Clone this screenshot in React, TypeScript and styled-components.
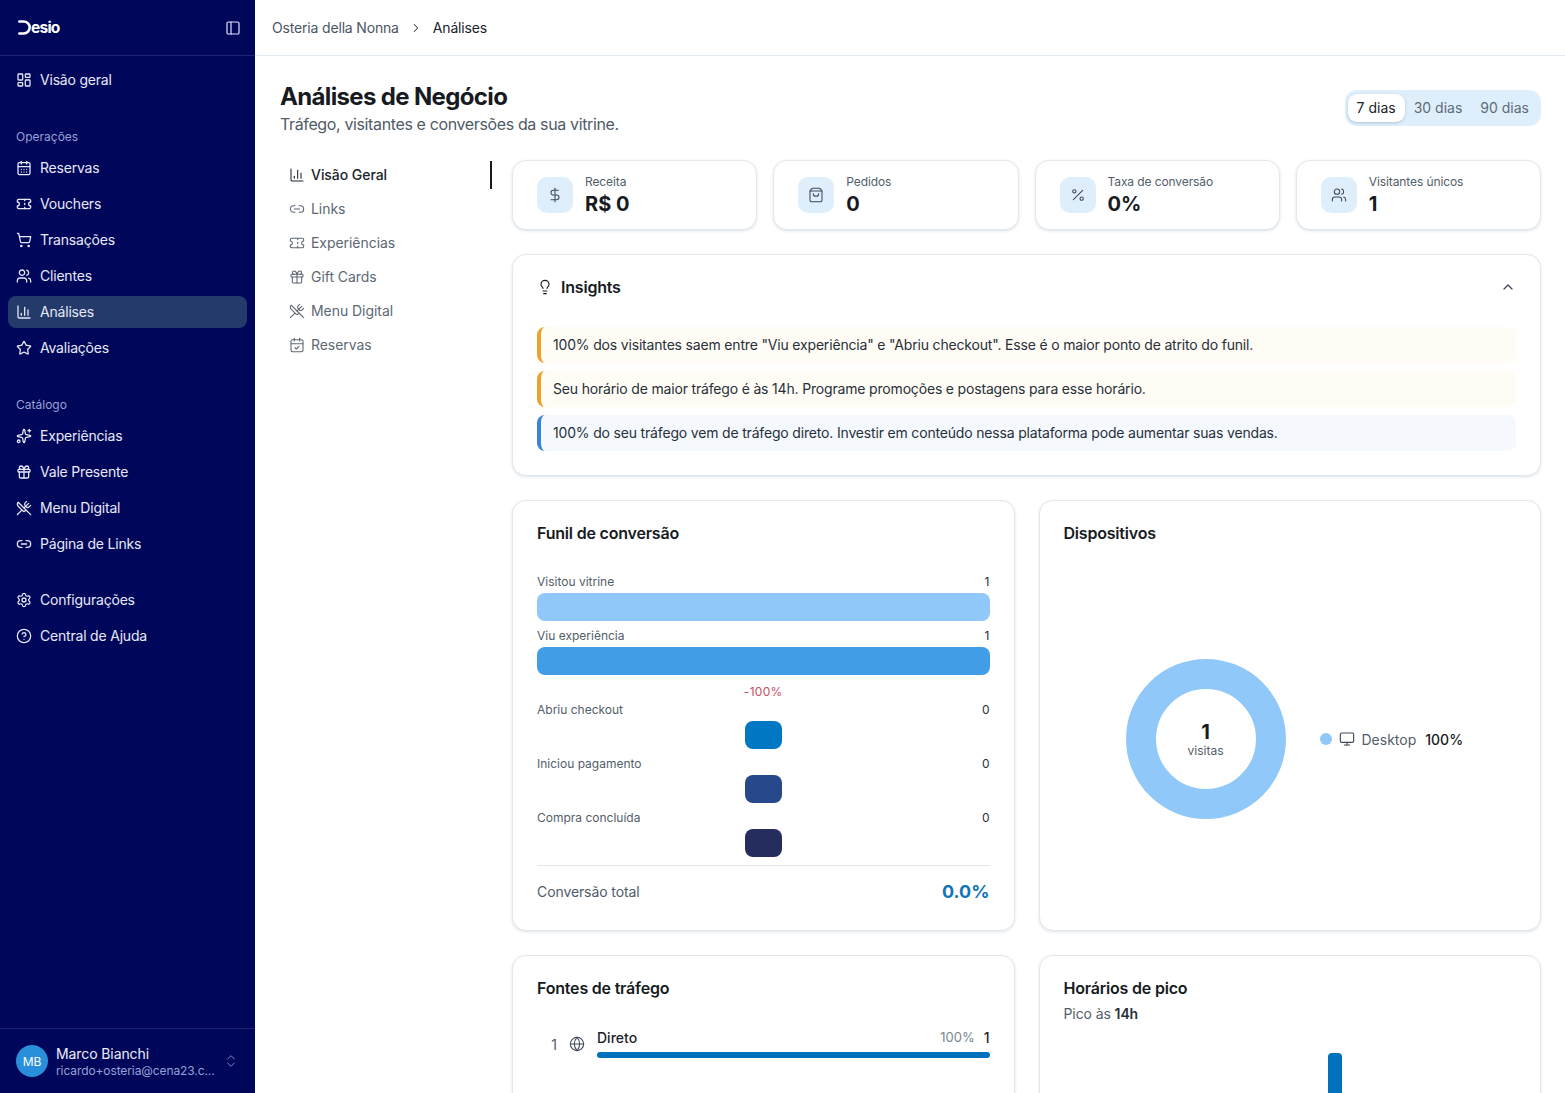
import React from "react";
import styled, { createGlobalStyle } from "styled-components";
import {
  CalendarCheck,
  CalendarDays,
  ChartColumn,
  ChevronRight,
  ChevronUp,
  ChevronsUpDown,
  CircleHelp,
  DollarSign,
  Gift,
  Globe,
  LayoutDashboard,
  Lightbulb,
  Link2,
  Monitor,
  PanelLeft,
  Percent,
  Settings,
  ShoppingBag,
  ShoppingCart,
  Sparkles,
  Star,
  Ticket,
  Users,
  UtensilsCrossed,
} from "lucide-react";

const GlobalStyle = createGlobalStyle`
  html, body {
    margin: 0;
    height: 100%;
    overflow: hidden;
    background: #fff;
  }
  body {
    font-family: Inter, "Liberation Sans", sans-serif;
    color: #171b21;
  }
  * {
    box-sizing: border-box;
  }
`;

const operacoes = [
  { label: "Reservas", icon: CalendarDays },
  { label: "Vouchers", icon: Ticket },
  { label: "Transações", icon: ShoppingCart },
  { label: "Clientes", icon: Users },
  { label: "Análises", icon: ChartColumn, active: true },
  { label: "Avaliações", icon: Star },
];

const catalogo = [
  { label: "Experiências", icon: Sparkles },
  { label: "Vale Presente", icon: Gift },
  { label: "Menu Digital", icon: UtensilsCrossed },
  { label: "Página de Links", icon: Link2 },
];

const suporte = [
  { label: "Configurações", icon: Settings },
  { label: "Central de Ajuda", icon: CircleHelp },
];

const sections = [
  { label: "Visão Geral", icon: ChartColumn, active: true },
  { label: "Links", icon: Link2 },
  { label: "Experiências", icon: Ticket },
  { label: "Gift Cards", icon: Gift },
  { label: "Menu Digital", icon: UtensilsCrossed },
  { label: "Reservas", icon: CalendarCheck },
];

const kpis = [
  { label: "Receita", value: "R$ 0", icon: DollarSign },
  { label: "Pedidos", value: "0", icon: ShoppingBag },
  { label: "Taxa de conversão", value: "0%", icon: Percent },
  { label: "Visitantes únicos", value: "1", icon: Users },
];

const insights = [
  {
    tone: "warn",
    text: '100% dos visitantes saem entre "Viu experiência" e "Abriu checkout". Esse é o maior ponto de atrito do funil.',
  },
  {
    tone: "warn",
    text: "Seu horário de maior tráfego é às 14h. Programe promoções e postagens para esse horário.",
  },
  {
    tone: "info",
    text: "100% do seu tráfego vem de tráfego direto. Investir em conteúdo nessa plataforma pode aumentar suas vendas.",
  },
];

const funnel = [
  { label: "Visitou vitrine", count: 1, width: 100, color: "#90c8f9" },
  { label: "Viu experiência", count: 1, width: 100, color: "#419de6" },
  { label: "Abriu checkout", count: 0, width: 0, color: "#0077c2", drop: "-100%" },
  { label: "Iniciou pagamento", count: 0, width: 0, color: "#27488a" },
  { label: "Compra concluída", count: 0, width: 0, color: "#252d5f" },
];

const hours = Array.from({ length: 24 }, (_, h) => (h === 14 ? 120 : 0));

const Shell = styled.div`
  display: grid;
  grid-template-columns: 255px 1fr;
  height: 100vh;
  overflow: hidden;
`;

const Sidebar = styled.aside`
  display: flex;
  flex-direction: column;
  height: 100vh;
  background: #000659;
  color: #e6e9f7;
`;

const SideHeader = styled.div`
  display: flex;
  align-items: center;
  justify-content: space-between;
  height: 56px;
  padding: 0 14px 0 18px;
  border-bottom: 1px solid #1c2570;
`;

const Logo = styled.div`
  display: flex;
  align-items: center;
  font-size: 15.5px;
  font-weight: 700;
  letter-spacing: -0.75px;
  color: #fff;
`;

const IconButton = styled.span`
  display: flex;
  color: #dfe3f5;
`;

const SideBody = styled.nav`
  flex: 1;
  display: flex;
  flex-direction: column;
  gap: 24px;
  padding: 8px 8px 0;
`;

const SideGroup = styled.div`
  display: flex;
  flex-direction: column;
  gap: 4px;
`;

const GroupLabel = styled.div`
  display: flex;
  align-items: center;
  height: 28px;
  padding: 4px 0 0 8px;
  font-size: 12px;
  color: #9aa0d6;
`;

const SideItem = styled.a<{ $active?: boolean }>`
  display: flex;
  align-items: center;
  gap: 8px;
  height: 32px;
  padding: 0 8px;
  border-radius: 8px;
  font-size: 14px;
  letter-spacing: -0.2px;
  color: #e6e9f7;
  background: ${(p) => (p.$active ? "#233a6b" : "transparent")};
`;

const ItemLabel = styled.span`
  padding-bottom: 2px;
`;

const SideFooter = styled.div`
  display: flex;
  align-items: center;
  gap: 8px;
  height: 65px;
  padding: 0 16px;
  border-top: 1px solid #1c2570;
`;

const Avatar = styled.div`
  display: flex;
  align-items: center;
  justify-content: center;
  flex: none;
  width: 32px;
  height: 32px;
  border-radius: 50%;
  background: #2a8fdb;
  color: #fff;
  font-size: 12px;
`;

const UserInfo = styled.div`
  flex: 1;
  min-width: 0;
  padding-top: 2px;
`;

const UserName = styled.div`
  font-size: 14px;
  line-height: 18px;
  letter-spacing: -0.1px;
  color: #eceefa;
`;

const UserMail = styled.div`
  font-size: 12px;
  line-height: 16px;
  letter-spacing: -0.1px;
  color: #9aa0d6;
  white-space: nowrap;
`;

const Main = styled.main`
  min-width: 0;
  height: 100vh;
  overflow: hidden;
`;

const TopBar = styled.header`
  display: flex;
  align-items: center;
  gap: 10px;
  height: 56px;
  padding-left: 17px;
  border-bottom: 1px solid #dfe9ef;
  font-size: 14px;
  letter-spacing: -0.17px;
`;

const Crumb = styled.span<{ $current?: boolean }>`
  color: ${(p) => (p.$current ? "#1d232b" : "#4b5563")};
`;

const Content = styled.div`
  padding: 24px 24px 0 25px;
`;

const PageHead = styled.div`
  display: flex;
  align-items: center;
  justify-content: space-between;
  margin-bottom: 24px;
`;

const Title = styled.h1`
  margin: 1px 0 -1px;
  font-size: 24px;
  line-height: 32px;
  font-weight: 700;
  letter-spacing: -0.65px;
  color: #171b21;
`;

const Subtitle = styled.p`
  margin: 0;
  font-size: 16px;
  line-height: 24px;
  letter-spacing: -0.37px;
  color: #4f5b67;
`;

const RangeTabs = styled.div`
  display: flex;
  height: 36px;
  padding: 4px 3px;
  border-radius: 12px;
  background: #deeffb;
`;

const RangeTab = styled.span<{ $active?: boolean }>`
  display: flex;
  align-items: center;
  padding: 0 9px 2px;
  border-radius: 9px;
  font-size: 14px;
  color: ${(p) => (p.$active ? "#1d232b" : "#5d6b78")};
  background: ${(p) => (p.$active ? "#fff" : "transparent")};
  box-shadow: ${(p) => (p.$active ? "0 1px 3px rgba(20, 50, 80, 0.22)" : "none")};
`;

const Columns = styled.div`
  display: grid;
  grid-template-columns: 212px 1fr;
  column-gap: 20px;
`;

const SectionNav = styled.nav`
  display: flex;
  flex-direction: column;
  gap: 6px;
  padding-top: 1px;
`;

const SectionItem = styled.a<{ $active?: boolean }>`
  display: flex;
  align-items: center;
  gap: 6px;
  height: 28px;
  padding-left: 9px;
  font-size: 14px;
  letter-spacing: -0.05px;
  font-weight: ${(p) => (p.$active ? 500 : 400)};
  color: ${(p) => (p.$active ? "#1d232b" : "#5d6873")};
  border-right: 2px solid ${(p) => (p.$active ? "#171b21" : "transparent")};
`;

const Stack = styled.div`
  display: flex;
  flex-direction: column;
  gap: 24px;
  min-width: 0;
`;

const KpiRow = styled.div`
  display: grid;
  grid-template-columns: repeat(4, 1fr);
  gap: 16px;
`;

const Card = styled.section`
  border: 1px solid #e1e9ef;
  border-radius: 14px;
  background: #fff;
  box-shadow: 0 1px 3px rgba(20, 50, 80, 0.14);
`;

const KpiCard = styled(Card)`
  display: flex;
  align-items: center;
  gap: 12px;
  height: 70px;
  padding: 0 24px;
`;

const KpiIcon = styled.div`
  display: flex;
  align-items: center;
  justify-content: center;
  flex: none;
  width: 36px;
  height: 36px;
  border-radius: 10px;
  background: #deeffb;
  color: #3d4a57;
`;

const KpiText = styled.div`
  padding-top: 1px;
`;

const KpiLabel = styled.div`
  font-size: 12px;
  line-height: 16px;
  letter-spacing: -0.1px;
  color: #525e6a;
`;

const KpiValue = styled.div`
  font-size: 20px;
  line-height: 28px;
  font-weight: 700;
  color: #171b21;
`;

const PaddedCard = styled(Card)`
  padding: 24px;
`;

const InsightsHead = styled.div`
  display: flex;
  align-items: center;
  gap: 8px;
  height: 16px;
  margin-bottom: 32px;
`;

const CardTitle = styled.h2`
  margin: 0;
  font-size: 16px;
  line-height: 16px;
  font-weight: 600;
  letter-spacing: -0.2px;
  color: #171b21;
`;

const Collapse = styled.span`
  display: flex;
  margin-left: auto;
  color: #3d4a57;
`;

const InsightList = styled.div`
  display: flex;
  flex-direction: column;
  gap: 8px;
`;

const Insight = styled.div<{ $tone: string }>`
  display: flex;
  align-items: center;
  height: 36px;
  padding: 0 0 2px 12px;
  border-left: 4px solid ${(p) => (p.$tone === "warn" ? "#eba32c" : "#3b82d8")};
  border-radius: 8px;
  font-size: 14px;
  letter-spacing: -0.175px;
  color: #27303a;
  background: ${(p) => (p.$tone === "warn" ? "#fffcf5" : "#f5f9fe")};
`;

const TwoCols = styled.div`
  display: grid;
  grid-template-columns: 1fr 1fr;
  gap: 24px;
`;

const FunnelCard = styled(PaddedCard)`
  height: 431px;
`;

const FunnelList = styled.div`
  display: flex;
  flex-direction: column;
  gap: 6px;
  margin-top: 32px;
`;

const FunnelStep = styled.div``;

const DropTag = styled.div`
  height: 18px;
  margin-top: 2px;
  text-align: center;
  font-size: 12px;
  line-height: 18px;
  letter-spacing: 0.3px;
  color: #c9505f;
`;

const FunnelHead = styled.div`
  display: flex;
  justify-content: space-between;
  height: 16px;
  margin-bottom: 4px;
  font-size: 12px;
  line-height: 18px;
  color: #525e6a;
`;

const FunnelCount = styled.span`
  color: #27303a;
`;

const BarTrack = styled.div`
  display: flex;
  justify-content: center;
`;

const FunnelBar = styled.div<{ $color: string; $width: number }>`
  width: ${(p) => p.$width}%;
  min-width: 37px;
  height: 28px;
  border-radius: 8px;
  background: ${(p) => p.$color};
`;

const TotalRow = styled.div`
  display: flex;
  align-items: center;
  justify-content: space-between;
  height: 41px;
  margin-top: 8px;
  padding-top: 10px;
  border-top: 1px solid #e1e9ef;
  font-size: 14px;
  letter-spacing: -0.1px;
  color: #4f5b67;
`;

const TotalValue = styled.span`
  font-size: 18px;
  font-weight: 700;
  letter-spacing: 0;
  color: #0f75b8;
`;

const DeviceBody = styled.div`
  display: flex;
  align-items: center;
  gap: 34px;
  margin-top: 118px;
  padding-left: 62px;
`;

const Donut = styled.div`
  display: flex;
  flex-direction: column;
  align-items: center;
  justify-content: center;
  flex: none;
  width: 160px;
  height: 160px;
  border: 30px solid #90c8f9;
  border-radius: 50%;
`;

const DonutValue = styled.div`
  font-size: 20px;
  line-height: 24px;
  font-weight: 700;
  color: #171b21;
`;

const DonutLabel = styled.div`
  font-size: 12px;
  line-height: 14px;
  color: #525e6a;
`;

const Legend = styled.div`
  display: flex;
  align-items: center;
  font-size: 14px;
  color: #525e6a;
`;

const LegendDot = styled.span`
  width: 12px;
  height: 12px;
  margin-right: 7px;
  border-radius: 50%;
  background: #90c8f9;
`;

const LegendName = styled.span`
  margin: 0 9px 0 7px;
`;

const LegendValue = styled.span`
  font-weight: 500;
  color: #171b21;
`;

const TrafficRow = styled.div`
  display: flex;
  align-items: center;
  gap: 12px;
  margin-top: 34px;
  font-size: 14px;
`;

const TrafficRank = styled.span`
  width: 20px;
  text-align: right;
  color: #4f5b67;
`;

const TrafficBody = styled.div`
  flex: 1;
  min-width: 0;
`;

const TrafficHead = styled.div`
  display: flex;
  align-items: center;
  height: 16px;
  margin-bottom: 6px;
  padding-bottom: 2px;
  font-weight: 500;
  color: #1d232b;
`;

const TrafficPct = styled.span`
  margin: 0 9px 0 auto;
  font-size: 13px;
  font-weight: 400;
  color: #7a858f;
`;

const TrafficBar = styled.div`
  height: 6px;
  border-radius: 3px;
  background: #0071bc;
`;

const PeakNote = styled.p`
  margin: 8px 0 0;
  font-size: 14px;
  line-height: 20px;
  letter-spacing: -0.1px;
  color: #525e6a;
`;

const PeakStrong = styled.strong`
  font-weight: 600;
  color: #27303a;
`;

const HourChart = styled.div`
  display: flex;
  align-items: flex-end;
  gap: 4.92px;
  height: 120px;
  margin-top: 29px;
`;

const HourBar = styled.div<{ $height: number }>`
  flex: none;
  width: 14px;
  height: ${(p) => p.$height}px;
  border-radius: 4px 4px 0 0;
  background: #0071bc;
`;

const NavIcon = ({ icon: Icon, weight = 1.6 }: { icon: React.ElementType; weight?: number }) => (
  <Icon size={16} strokeWidth={weight} />
);

function Dmark() {
  return (
    <svg width="13" height="15" viewBox="0 0 13 15" fill="none">
      <path
        d="M1.3 1.5h4.4a6 6 0 0 1 0 12H1.3"
        stroke="#fff"
        strokeWidth="2.5"
        strokeLinecap="round"
      />
    </svg>
  );
}

function SideLink({
  icon,
  label,
  active,
}: {
  icon: React.ElementType;
  label: string;
  active?: boolean;
}) {
  return (
    <SideItem $active={active}>
      <NavIcon icon={icon} weight={1.9} />
      <ItemLabel>{label}</ItemLabel>
    </SideItem>
  );
}

function App() {
  return (
    <Shell>
      <GlobalStyle />
      <Sidebar>
        <SideHeader>
          <Logo>
            <Dmark />
            esio
          </Logo>
          <IconButton>
            <PanelLeft size={16} strokeWidth={1.8} />
          </IconButton>
        </SideHeader>
        <SideBody>
          <SideGroup>
            <SideLink icon={LayoutDashboard} label="Visão geral" />
          </SideGroup>
          <SideGroup>
            <GroupLabel>Operações</GroupLabel>
            {operacoes.map((item) => (
              <SideLink key={item.label} {...item} />
            ))}
          </SideGroup>
          <SideGroup>
            <GroupLabel>Catálogo</GroupLabel>
            {catalogo.map((item) => (
              <SideLink key={item.label} {...item} />
            ))}
          </SideGroup>
          <SideGroup>
            {suporte.map((item) => (
              <SideLink key={item.label} {...item} />
            ))}
          </SideGroup>
        </SideBody>
        <SideFooter>
          <Avatar>MB</Avatar>
          <UserInfo>
            <UserName>Marco Bianchi</UserName>
            <UserMail>ricardo+osteria@cena23.c...</UserMail>
          </UserInfo>
          <IconButton>
            <ChevronsUpDown size={16} strokeWidth={1.4} color="#8d93c4" />
          </IconButton>
        </SideFooter>
      </Sidebar>

      <Main>
        <TopBar>
          <Crumb>Osteria della Nonna</Crumb>
          <ChevronRight size={14} strokeWidth={1.8} color="#374151" />
          <Crumb $current>Análises</Crumb>
        </TopBar>
        <Content>
          <PageHead>
            <div>
              <Title>Análises de Negócio</Title>
              <Subtitle>Tráfego, visitantes e conversões da sua vitrine.</Subtitle>
            </div>
            <RangeTabs>
              <RangeTab $active>7 dias</RangeTab>
              <RangeTab>30 dias</RangeTab>
              <RangeTab>90 dias</RangeTab>
            </RangeTabs>
          </PageHead>
          <Columns>
            <SectionNav>
              {sections.map((item) => (
                <SectionItem key={item.label} $active={item.active}>
                  <NavIcon icon={item.icon} />
                  <ItemLabel>{item.label}</ItemLabel>
                </SectionItem>
              ))}
            </SectionNav>
            <Stack>
              <KpiRow>
                {kpis.map((kpi) => (
                  <KpiCard key={kpi.label}>
                    <KpiIcon>
                      <NavIcon icon={kpi.icon} />
                    </KpiIcon>
                    <KpiText>
                      <KpiLabel>{kpi.label}</KpiLabel>
                      <KpiValue>{kpi.value}</KpiValue>
                    </KpiText>
                  </KpiCard>
                ))}
              </KpiRow>

              <PaddedCard>
                <InsightsHead>
                  <Lightbulb size={16} strokeWidth={1.7} />
                  <CardTitle>Insights</CardTitle>
                  <Collapse>
                    <ChevronUp size={16} strokeWidth={1.9} />
                  </Collapse>
                </InsightsHead>
                <InsightList>
                  {insights.map((item) => (
                    <Insight key={item.text} $tone={item.tone}>
                      {item.text}
                    </Insight>
                  ))}
                </InsightList>
              </PaddedCard>

              <TwoCols>
                <FunnelCard>
                  <CardTitle>Funil de conversão</CardTitle>
                  <FunnelList>
                    {funnel.map((step) => (
                      <FunnelStep key={step.label}>
                        {step.drop && <DropTag>{step.drop}</DropTag>}
                        <FunnelHead>
                          {step.label}
                          <FunnelCount>{step.count}</FunnelCount>
                        </FunnelHead>
                        <BarTrack>
                          <FunnelBar $color={step.color} $width={step.width} />
                        </BarTrack>
                      </FunnelStep>
                    ))}
                  </FunnelList>
                  <TotalRow>
                    Conversão total
                    <TotalValue>0.0%</TotalValue>
                  </TotalRow>
                </FunnelCard>

                <PaddedCard>
                  <CardTitle>Dispositivos</CardTitle>
                  <DeviceBody>
                    <Donut>
                      <DonutValue>1</DonutValue>
                      <DonutLabel>visitas</DonutLabel>
                    </Donut>
                    <Legend>
                      <LegendDot />
                      <Monitor size={16} strokeWidth={1.7} color="#3d4a57" />
                      <LegendName>Desktop</LegendName>
                      <LegendValue>100%</LegendValue>
                    </Legend>
                  </DeviceBody>
                </PaddedCard>
              </TwoCols>

              <TwoCols>
                <PaddedCard>
                  <CardTitle>Fontes de tráfego</CardTitle>
                  <TrafficRow>
                    <TrafficRank>1</TrafficRank>
                    <Globe size={16} strokeWidth={1.6} color="#3d4a57" />
                    <TrafficBody>
                      <TrafficHead>
                        Direto
                        <TrafficPct>100%</TrafficPct>1
                      </TrafficHead>
                      <TrafficBar />
                    </TrafficBody>
                  </TrafficRow>
                </PaddedCard>
                <PaddedCard>
                  <CardTitle>Horários de pico</CardTitle>
                  <PeakNote>
                    Pico às <PeakStrong>14h</PeakStrong>
                  </PeakNote>
                  <HourChart>
                    {hours.map((h, i) => (
                      <HourBar key={i} $height={h} />
                    ))}
                  </HourChart>
                </PaddedCard>
              </TwoCols>
            </Stack>
          </Columns>
        </Content>
      </Main>
    </Shell>
  );
}

export default App;
